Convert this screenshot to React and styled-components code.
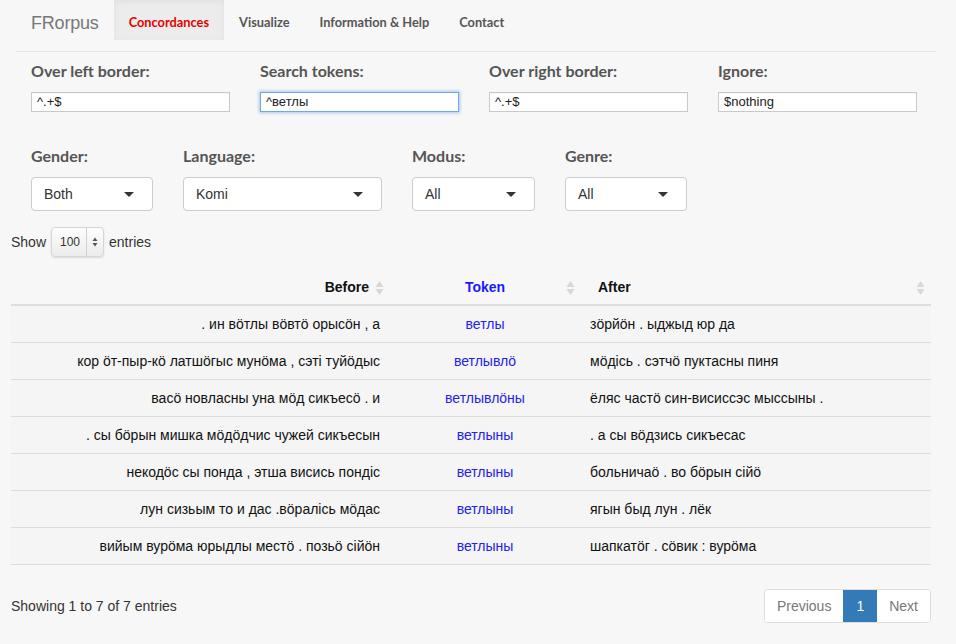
import React from "react";
import styled, { createGlobalStyle, css } from "styled-components";

const GlobalStyle = createGlobalStyle`
  html, body { margin: 0; padding: 0; background: #f7f7f7; }
  body { font-family: "Liberation Sans", Arial, sans-serif; color: #333; }
  * { box-sizing: border-box; }
`;

const Page = styled.div`
  width: 956px;
  min-height: 644px;
  background: #f7f7f7;
`;

const Navbar = styled.nav`
  display: flex;
  align-items: flex-start;
  height: 52px;
  margin: 0 20px 0 16px;
  border-bottom: 1px solid #e3e3e3;
`;

const Brand = styled.div`
  font-family: "Liberation Sans", Arial, sans-serif;
  font-size: 18px;
  color: #777;
  padding: 13px 15px 0 15px;
  line-height: 20px;
  letter-spacing: -0.2px;
`;

const NavItem = styled.div`
  font-family: Lato, "Open Sans", sans-serif;
  font-weight: 700;
  font-size: 12.8px;
  height: 40px;
  line-height: 44px;
  padding: 0 15px;
  color: ${(p) => (p.$active ? "#e60000" : "#555")};
  ${(p) =>
    p.$active &&
    css`
      background: #ececec;
      box-shadow: inset 0 2px 6px rgba(0, 0, 0, 0.05);
    `}
`;

const Form = styled.div`
  padding: 0 0 0 31px;
`;

const FieldGrid = styled.div`
  display: grid;
  grid-template-columns: ${(p) => p.$cols};
  margin-top: ${(p) => p.$top}px;
`;

const Field = styled.div`
  display: flex;
  flex-direction: column;
`;

const Label = styled.label`
  font-family: Lato, "Open Sans", sans-serif;
  font-weight: 700;
  font-size: 16px;
  color: #555;
  line-height: 20px;
  margin-bottom: 11px;
`;

const TextInput = styled.div`
  width: 199px;
  height: 20px;
  background: #fff;
  border: 1px solid ${(p) => (p.$focus ? "#6ea9e3" : "#c9c9c9")};
  box-shadow: ${(p) => (p.$focus ? "0 0 3px 1px rgba(100,160,230,0.55)" : "inset 0 1px 1px rgba(0,0,0,0.04)")};
  font-size: 13px;
  color: #222;
  line-height: 18px;
  padding-left: 5px;
`;

const SelectBox = styled.div`
  width: ${(p) => p.$w}px;
  height: 34px;
  background: #fff;
  border: 1px solid #ccc;
  border-radius: 4px;
  display: flex;
  align-items: center;
  justify-content: space-between;
  padding: 0 18px 0 12px;
  font-size: 14px;
  color: #333;
`;

const Caret = styled.span`
  width: 0;
  height: 0;
  border-left: 5px solid transparent;
  border-right: 5px solid transparent;
  border-top: 5px solid #333;
`;

const LengthRow = styled.div`
  display: flex;
  align-items: center;
  gap: 5px;
  padding: 16px 0 0 11px;
  font-size: 14px;
  color: #333;
`;

const LengthSelect = styled.div`
  width: 53px;
  height: 30px;
  border: 1px solid #d6d6d6;
  border-radius: 4px;
  background: linear-gradient(#fdfdfd, #ececec);
  box-shadow: 0 1px 2px rgba(0, 0, 0, 0.12);
  display: flex;
  align-items: center;
  font-size: 12px;
  color: #333;
`;

const LengthValue = styled.span`
  flex: 1;
  text-align: center;
  padding-left: 2px;
`;

const LengthArrows = styled.span`
  width: 17px;
  height: 100%;
  border-left: 1px solid #d0d0d0;
  display: flex;
  align-items: center;
  justify-content: center;
`;

const Table = styled.table`
  margin: 12px 0 0 11px;
  width: 920px;
  border-collapse: collapse;
  font-size: 14px;
  table-layout: fixed;
`;

const Th = styled.th`
  height: 36px;
  font-weight: 700;
  font-size: 14px;
  color: ${(p) => (p.$blue ? "#1a1aff" : "#111")};
  text-align: ${(p) => p.$align};
  padding: 0 ${(p) => (p.$align === "right" ? 21 : 18)}px 0 18px;
  border-bottom: 2px solid #ddd;
  position: relative;
  vertical-align: middle;
`;

const SortIcon = styled.svg`
  position: absolute;
  right: ${(p) => p.$right}px;
  top: 11px;
`;

const Td = styled.td`
  height: 37px;
  padding: 0 10px;
  border-bottom: 1px solid #ddd;
  background: #f5f5f5;
  text-align: ${(p) => p.$align};
  color: ${(p) => (p.$blue ? "#2222ee" : "#111")};
  white-space: nowrap;
  vertical-align: middle;
`;

const Footer = styled.div`
  display: flex;
  justify-content: space-between;
  align-items: center;
  width: 920px;
  margin: 24px 0 0 11px;
`;

const Info = styled.div`
  font-size: 14px;
  color: #333;
`;

const Pager = styled.div`
  display: flex;
  border: 1px solid #ddd;
  border-radius: 4px;
  overflow: hidden;
  background: #fff;
`;

const PageBtn = styled.div`
  height: 32px;
  line-height: 32px;
  padding: 0 ${(p) => p.$pad}px;
  font-size: 14px;
  color: ${(p) => (p.$active ? "#fff" : "#777")};
  background: ${(p) => (p.$active ? "#337ab7" : "#fff")};
`;

const Sort = ({ right }) => (
  <SortIcon $right={right} width="9" height="16" viewBox="0 0 9 16">
    <path d="M4.5 1 L8.5 7 L0.5 7 Z" fill="#d8d8d8" />
    <path d="M4.5 15 L8.5 9 L0.5 9 Z" fill="#d8d8d8" />
  </SortIcon>
);

const rows = [
  [". ин вöтлы вöвтö орысöн , а", "ветлы", "зöрйöн . ыджыд юр да"],
  ["кор öт-пыр-кö латшöгыс мунöма , сэтi туйöдыс", "ветлывлö", "мöдiсь . сэтчö пуктасны пиня"],
  ["васö новласны уна мöд сикъесö . и", "ветлывлöны", "ёляс частö син-висиссэс мыссыны ."],
  [". сы бöрын мишка мöдöдчис чужей сикъесын", "ветлыны", ". а сы вöдзись сикъесас"],
  ["некодöс сы понда , этша висись пондiс", "ветлыны", "больничаö . во бöрын сiйö"],
  ["лун сизьым то и дас .вöралiсь мöдас", "ветлыны", "ягын быд лун . лёк"],
  ["вийым вурöма юрыдлы местö . позьö сiйöн", "ветлыны", "шапкатöг . сöвик : вурöма"],
];

export default function App() {
  return (
    <Page>
      <GlobalStyle />
      <Navbar>
        <Brand>FRorpus</Brand>
        <NavItem $active>Concordances</NavItem>
        <NavItem>Visualize</NavItem>
        <NavItem>Information &amp; Help</NavItem>
        <NavItem>Contact</NavItem>
      </Navbar>
      <Form>
        <FieldGrid $cols="229px 229px 229px 229px" $top={9}>
          <Field>
            <Label>Over left border:</Label>
            <TextInput>^.+$</TextInput>
          </Field>
          <Field>
            <Label>Search tokens:</Label>
            <TextInput $focus>^ветлы</TextInput>
          </Field>
          <Field>
            <Label>Over right border:</Label>
            <TextInput>^.+$</TextInput>
          </Field>
          <Field>
            <Label>Ignore:</Label>
            <TextInput>$nothing</TextInput>
          </Field>
        </FieldGrid>
        <FieldGrid $cols="152px 229px 153px 153px" $top={34}>
          <Field>
            <Label>Gender:</Label>
            <SelectBox $w={122}>Both<Caret /></SelectBox>
          </Field>
          <Field>
            <Label>Language:</Label>
            <SelectBox $w={199}>Komi<Caret /></SelectBox>
          </Field>
          <Field>
            <Label>Modus:</Label>
            <SelectBox $w={123}>All<Caret /></SelectBox>
          </Field>
          <Field>
            <Label>Genre:</Label>
            <SelectBox $w={122}>All<Caret /></SelectBox>
          </Field>
        </FieldGrid>
      </Form>
      <LengthRow>
        Show
        <LengthSelect>
          <LengthValue>100</LengthValue>
          <LengthArrows>
            <svg width="6" height="10" viewBox="0 0 6 10">
              <path d="M3 0.5 L5.5 4 L0.5 4 Z" fill="#555" />
              <path d="M3 9.5 L5.5 6 L0.5 6 Z" fill="#555" />
            </svg>
          </LengthArrows>
        </LengthSelect>
        entries
      </LengthRow>
      <Table>
        <colgroup>
          <col style={{ width: 379 }} />
          <col style={{ width: 190 }} />
          <col style={{ width: 351 }} />
        </colgroup>
        <thead>
          <tr>
            <Th $align="right">Before<Sort right={6} /></Th>
            <Th $align="center" $blue>Token<Sort right={5} /></Th>
            <Th $align="left">After<Sort right={6} /></Th>
          </tr>
        </thead>
        <tbody>
          {rows.map((r, i) => (
            <tr key={i}>
              <Td $align="right">{r[0]}</Td>
              <Td $align="center" $blue>{r[1]}</Td>
              <Td $align="left">{r[2]}</Td>
            </tr>
          ))}
        </tbody>
      </Table>
      <Footer>
        <Info>Showing 1 to 7 of 7 entries</Info>
        <Pager>
          <PageBtn $pad={12}>Previous</PageBtn>
          <PageBtn $pad={13} $active>1</PageBtn>
          <PageBtn $pad={12}>Next</PageBtn>
        </Pager>
      </Footer>
    </Page>
  );
}
